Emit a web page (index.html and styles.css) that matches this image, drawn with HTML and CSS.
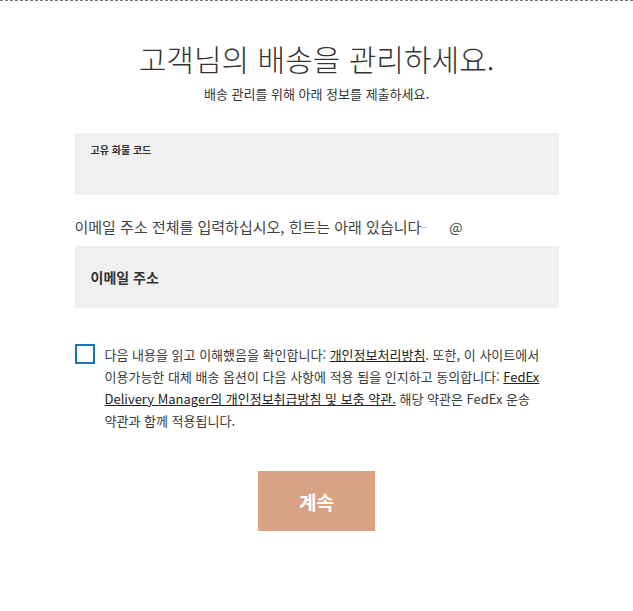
FILE: index.html
```html
<!DOCTYPE html>
<html lang="ko">
<head>
  <meta charset="UTF-8">
  <title>배송 관리</title>
  <link rel="stylesheet" href="styles.css">
</head>
<body>
  <div class="page">
    <h1 class="title">고객님의 배송을 관리하세요.</h1>
    <p class="sub">배송 관리를 위해 아래 정보를 제출하세요.</p>

    <div class="field">
      <span class="field-label small">고유 화물 코드</span>
    </div>

    <div class="hint">
      <span>이메일 주소 전체를 입력하십시오, 힌트는 아래 있습니다</span>
      <span class="dash"></span>
      <span class="at">@</span>
    </div>

    <div class="field field-email">
      <span class="field-label">이메일 주소</span>
    </div>

    <div class="agree">
      <span class="check"></span>
      <p>다음 내용을 읽고 이해했음을 확인합니다: <a href="#">개인정보처리방침</a>. 또한, 이 사이트에서 이용가능한 대체 배송 옵션이 다음 사항에 적용 됨을 인지하고 동의합니다: <a href="#">FedEx Delivery Manager의 개인정보취급방침 및 보충 약관.</a> 해당 약관은 FedEx 운송 약관과 함께 적용됩니다.</p>
    </div>

    <div class="actions">
      <button class="btn">계속</button>
    </div>
  </div>
</body>
</html>
```

FILE: styles.css
```css
body {
  margin: 0;
  background: #fff;
  color: #333;
  font-family: "Noto Sans CJK KR", "Noto Sans", sans-serif;
  border-top: 1px dashed #777;
}

.page {
  width: 484px;
  margin: 0 auto;
}

.title {
  margin: 35px 0 0;
  text-align: center;
  font-size: 30px;
  font-weight: 300;
  line-height: 44px;
  color: #333;
}

.sub {
  margin: 4px 0 0;
  text-align: center;
  font-size: 13px;
  line-height: 20px;
  color: #333;
}

.field {
  margin-top: 29px;
  height: 62px;
  background: #f0f0f0;
  padding: 10px 16px;
  box-sizing: border-box;
}

.field-label {
  font-size: 14px;
  font-weight: 700;
  color: #333;
}

.field-label.small {
  font-size: 10px;
  line-height: 14px;
  display: block;
}

.hint {
  margin-top: 20px;
  display: flex;
  align-items: center;
  font-size: 15px;
  line-height: 24px;
  color: #444;
}

.dash {
  width: 6px;
  height: 1px;
  background: #ccc;
}

.at {
  margin-left: 22px;
  font-size: 14px;
}

.field-email {
  margin-top: 7px;
  display: flex;
  align-items: center;
}

.agree {
  margin-top: 36px;
  display: flex;
  gap: 10px;
}

.check {
  flex: none;
  width: 20px;
  height: 20px;
  box-sizing: border-box;
  border: 2px solid #1a76b0;
}

.agree p {
  margin: 0;
  font-size: 13px;
  line-height: 22px;
  color: #3a3a3a;
  word-break: keep-all;
}

.agree a {
  color: #222;
  text-decoration: underline;
}

.actions {
  margin-top: 39px;
  display: flex;
  justify-content: center;
}

.btn {
  width: 117px;
  height: 60px;
  border: none;
  background: #d9a284;
  color: #fff;
  font-family: inherit;
  font-size: 19px;
  font-weight: 700;
}
```
